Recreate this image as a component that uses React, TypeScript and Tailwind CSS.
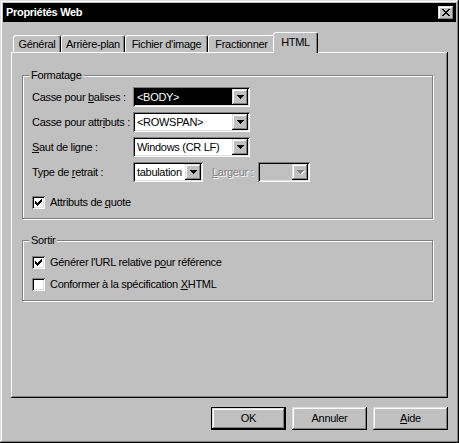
import React from "react";

const raised =
  "shadow-[inset_-1px_-1px_#000,inset_1px_1px_#dfdfdf,inset_-2px_-2px_#808080,inset_2px_2px_#fff]";
const sunken =
  "shadow-[inset_1px_1px_#808080,inset_-1px_-1px_#fff,inset_2px_2px_#000,inset_-2px_-2px_#dfdfdf]";

function Arrow({ disabled }: { disabled?: boolean }) {
  return (
    <svg width="7" height="4" viewBox="0 0 7 4" shapeRendering="crispEdges" className="overflow-visible">
      {disabled && <path d="M1 1h7v1H1zM2 2h5v1H2zM3 3h3v1H3zM4 4h1v1H4z" fill="#fff" />}
      <path d="M0 0h7v1H0zM1 1h5v1H1zM2 2h3v1H2zM3 3h1v1H3z" fill={disabled ? "#808080" : "#000"} />
    </svg>
  );
}

function Combo({
  w,
  value,
  focused,
  disabled,
}: {
  w: string;
  value?: string;
  focused?: boolean;
  disabled?: boolean;
}) {
  return (
    <div className={`${w} h-[20px] flex p-[2px] ${disabled ? "bg-[#c0c0c0]" : "bg-white"} ${sunken}`}>
      <div className="flex-1 flex items-stretch min-w-0">
        <div
          className={`flex-1 flex items-center pl-[2px] whitespace-nowrap ${
            focused ? "bg-black text-white" : "text-black"
          }`}
        >
          {value}
        </div>
      </div>
      <div className={`w-[16px] h-[16px] flex items-center justify-center bg-[#c0c0c0] ${raised}`}>
        <Arrow disabled={disabled} />
      </div>
    </div>
  );
}

function Check({ checked }: { checked?: boolean }) {
  return (
    <div className={`w-[13px] h-[13px] shrink-0 bg-white flex items-center justify-center ${sunken}`}>
      {checked && (
        <svg width="7" height="7" viewBox="0 0 7 7" shapeRendering="crispEdges">
          <path
            d="M6 0h1v1H6zM5 1h2v1H5zM0 2h1v1H0zM4 2h3v1H4zM0 3h2v1H0zM3 3h3v1H3zM0 4h5v1H0zM1 5h3v1H1zM2 6h1v1H2z"
            fill="#000"
          />
        </svg>
      )}
    </div>
  );
}

function Group({
  label,
  className,
  children,
}: {
  label: string;
  className: string;
  children: React.ReactNode;
}) {
  return (
    <div
      className={`relative w-[411px] border border-[#808080] shadow-[1px_1px_0_#fff,inset_1px_1px_0_#fff] ${className}`}
    >
      <span className="absolute left-[6px] -top-[7px] px-[2px] bg-[#c0c0c0] leading-[13px]">{label}</span>
      {children}
    </div>
  );
}

function Tab({ w, label, active }: { w: string; label: string; active?: boolean }) {
  if (active) {
    return (
      <div
        className={`${w} -ml-[2px] h-[21px] -mb-[1px] bg-[#c0c0c0] relative z-10 flex items-start justify-center pt-[3px] border-t border-l border-white border-r border-r-black rounded-t-[3px] shadow-[inset_-1px_0_#808080]`}
      >
        {label}
      </div>
    );
  }
  return (
    <div
      className={`${w} h-[17px] flex items-start justify-center pt-[2px] border-t border-l border-white border-r border-r-black rounded-t-[3px] shadow-[inset_-1px_0_#808080]`}
    >
      {label}
    </div>
  );
}

function Button({ label, isDefault }: { label: React.ReactNode; isDefault?: boolean }) {
  if (isDefault) {
    return (
      <div className="w-[75px] h-[23px] border border-black flex">
        <div className={`flex-1 flex items-center justify-center bg-[#c0c0c0] ${raised}`}>{label}</div>
      </div>
    );
  }
  return (
    <div className={`w-[75px] h-[23px] flex items-center justify-center bg-[#c0c0c0] ${raised}`}>{label}</div>
  );
}

export default function App() {
  return (
    <div
      className={`w-[459px] h-[443px] bg-[#c0c0c0] p-[3px] flex flex-col text-black text-[11px] leading-[13px] tracking-[-0.3px] font-['Liberation_Sans',Arial,sans-serif] shadow-[inset_-1px_-1px_#000,inset_1px_1px_#dfdfdf,inset_-2px_-2px_#808080,inset_2px_2px_#fff]`}
    >
      {/* Title bar */}
      <div className="h-[19px] bg-black flex items-center justify-between pl-[3px] pr-[2px]">
        <span className="text-white font-bold">Propriétés Web</span>
        <div className={`w-[16px] h-[14px] flex items-center justify-center bg-[#c0c0c0] ${raised}`}>
          <svg width="8" height="7" viewBox="0 0 8 7" shapeRendering="crispEdges">
            <path
              d="M0 0h2v1H0zM6 0h2v1H6zM1 1h2v1H1zM5 1h2v1H5zM2 2h4v1H2zM3 3h2v1H3zM2 4h4v1H2zM1 5h2v1H1zM5 5h2v1H5zM0 6h2v1H0zM6 6h2v1H6z"
              fill="#000"
            />
          </svg>
        </div>
      </div>

      {/* Tabs */}
      <div className="mt-[10px] ml-[10px] h-[20px] flex items-end relative z-10">
        <Tab w="w-[48px]" label="Général" />
        <Tab w="w-[64px]" label="Arrière-plan" />
        <Tab w="w-[83px]" label="Fichier d'image" />
        <Tab w="w-[67px]" label="Fractionner" />
        <Tab w="w-[45px]" label="HTML" active />
      </div>

      {/* Panel */}
      <div
        className={`mx-[8px] h-[346px] bg-[#c0c0c0] pt-[23px] pl-[11px] flex flex-col shadow-[inset_-1px_-1px_#000,inset_1px_1px_#fff,inset_-2px_-2px_#808080]`}
      >
        <Group label="Formatage" className="pt-[11px] pl-[9px] pb-[9px]">
          <div className="flex flex-col gap-[5px]">
            <div className="flex items-center h-[20px]">
              <span className="w-[101px]">
                Casse pour <u>b</u>alises :
              </span>
              <Combo w="w-[117px]" value="<BODY>" focused />
            </div>
            <div className="flex items-center h-[20px]">
              <span className="w-[101px]">
                Casse pour attr<u>i</u>buts :
              </span>
              <Combo w="w-[117px]" value="<ROWSPAN>" />
            </div>
            <div className="flex items-center h-[20px]">
              <span className="w-[101px]">
                <u>S</u>aut de ligne :
              </span>
              <Combo w="w-[117px]" value="Windows (CR LF)" />
            </div>
            <div className="flex items-center h-[20px]">
              <span className="w-[101px]">
                Type de <u>r</u>etrait :
              </span>
              <Combo w="w-[70px]" value="tabulation" />
              <span className="ml-[9px] w-[46px] text-[#808080] [text-shadow:1px_1px_0_#fff]">
                <u>L</u>argeur :
              </span>
              <Combo w="w-[52px]" disabled />
            </div>
          </div>
          <div className="mt-[14px] h-[13px] flex items-center gap-[5px]">
            <Check checked />
            <span>
              Attributs de <u>q</u>uote
            </span>
          </div>
        </Group>

        <Group label="Sortir" className="mt-[21px] pt-[15px] pl-[9px] pb-[9px]">
          <div className="flex flex-col gap-[9px]">
            <div className="h-[13px] flex items-center gap-[5px]">
              <Check checked />
              <span>
                Générer l'URL relative p<u>o</u>ur référence
              </span>
            </div>
            <div className="h-[13px] flex items-center gap-[5px]">
              <Check />
              <span>
                Conformer à la spécification <u>X</u>HTML
              </span>
            </div>
          </div>
        </Group>
      </div>

      {/* Buttons */}
      <div className="mt-[9px] mr-[8px] flex justify-end gap-[6px]">
        <Button label="OK" isDefault />
        <Button label="Annuler" />
        <Button
          label={
            <span>
              <u>A</u>ide
            </span>
          }
        />
      </div>
    </div>
  );
}
